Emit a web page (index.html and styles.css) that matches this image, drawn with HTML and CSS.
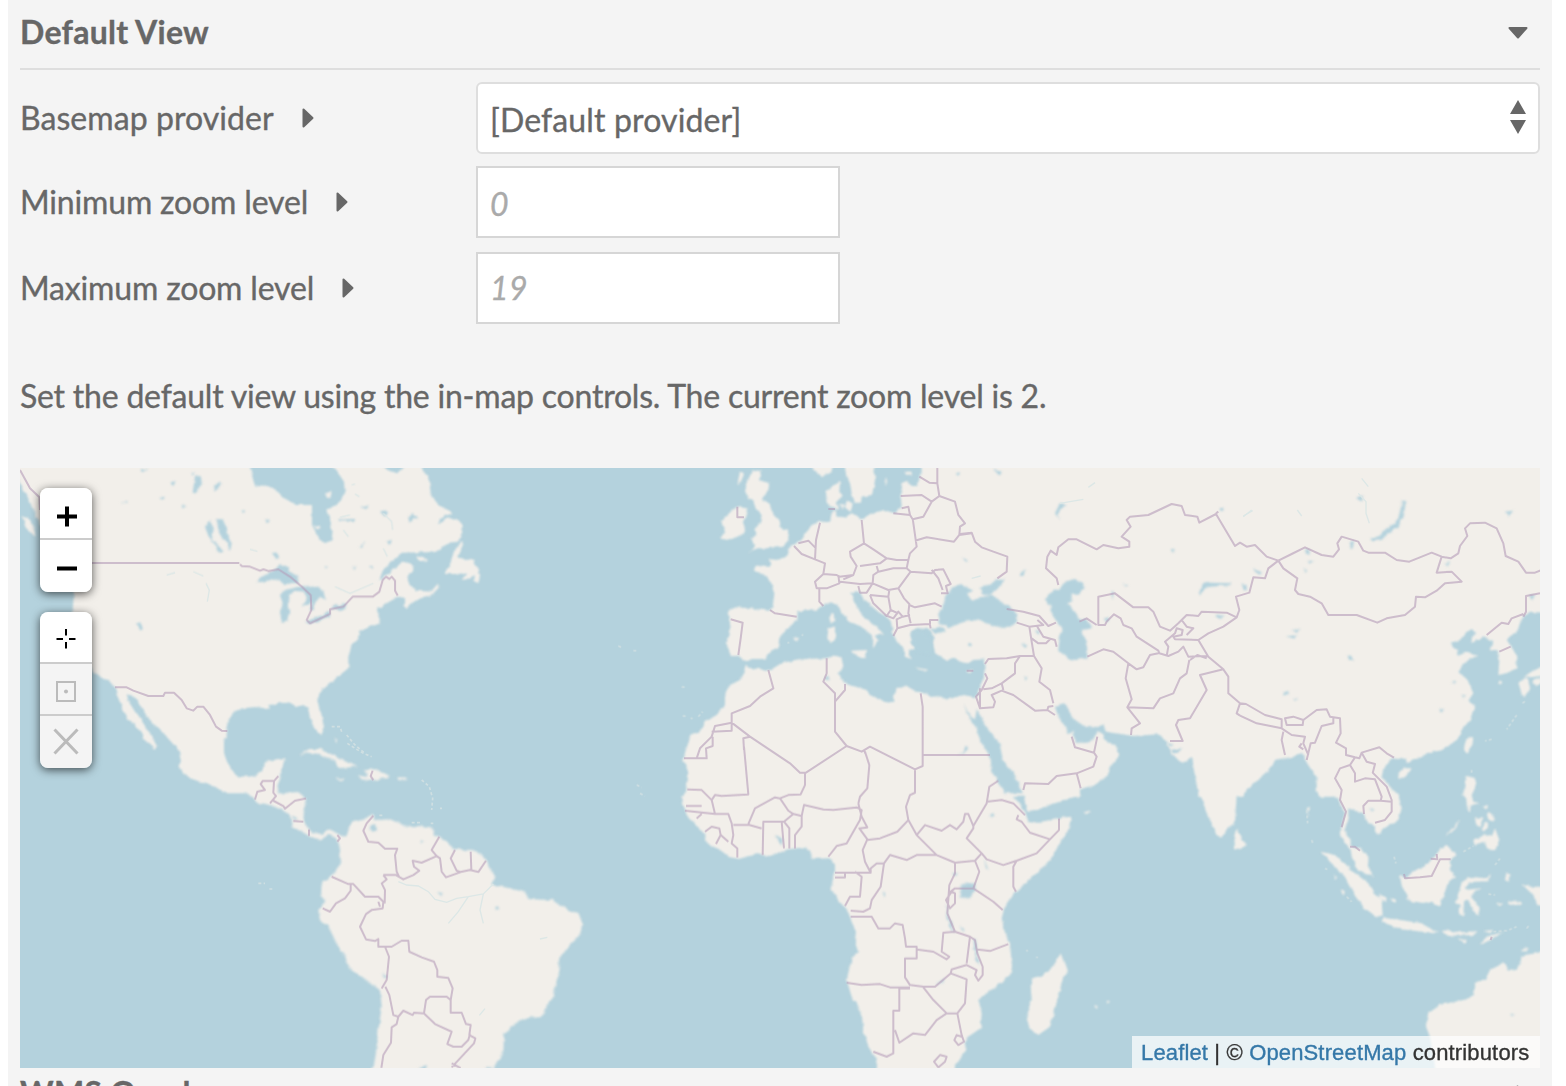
FILE: index.html
```html
<!DOCTYPE html>
<html lang="en">
<head>
<meta charset="utf-8">
<title>Default View</title>
<link rel="stylesheet" href="styles.css">
</head>
<body>
<main class="panel">
  <header class="section-head">
    <h2 class="section-title">Default View</h2>
    <svg class="caret-down" viewBox="0 0 20 12"><path d="M1.5 1h17L10 10.5Z"/></svg>
  </header>

  <div class="fields">
    <div class="field">
      <span class="label">Basemap provider <svg class="caret-right" viewBox="0 0 12 20"><path d="M1.5 1.5v17L10.5 10Z"/></svg></span>
      <div class="select"><span>[Default provider]</span>
        <svg class="spinner" viewBox="0 0 16 34"><path d="M8 0l8 14H0ZM8 34l8-14H0Z"/></svg>
      </div>
    </div>
    <div class="field">
      <span class="label label-tight">Minimum zoom level <svg class="caret-right" viewBox="0 0 12 20"><path d="M1.5 1.5v17L10.5 10Z"/></svg></span>
      <div class="input">0</div>
    </div>
    <div class="field field-last">
      <span class="label label-tight">Maximum zoom level <svg class="caret-right" viewBox="0 0 12 20"><path d="M1.5 1.5v17L10.5 10Z"/></svg></span>
      <div class="input input-max">19</div>
    </div>
  </div>

  <p class="hint">Set the default view using the in-map controls. The current zoom level is 2.</p>

  <div class="map">
    <svg class="tiles" viewBox="20 468 1520 600">
      <defs>
        <filter id="coast" filterUnits="userSpaceOnUse" x="0" y="440" width="1566" height="660" color-interpolation-filters="sRGB">
          <feTurbulence type="fractalNoise" baseFrequency=".16" numOctaves="2" seed="4" result="n"/>
          <feDisplacementMap in="SourceGraphic" in2="n" scale="4" xChannelSelector="R" yChannelSelector="G"/>
          <feGaussianBlur stdDeviation=".8"/>
        </filter>
        <filter id="soft" filterUnits="userSpaceOnUse" x="0" y="440" width="1566" height="660"><feGaussianBlur stdDeviation=".6"/></filter>
      </defs>

      <g class="land" filter="url(#coast)">
        <!-- western North America -->
        <g transform="translate(0 460) scale(.33333)">
          <path d="M40 0H745L752 30 765 80 800 76 820 85 845 110 890 135H905V735L870 728 840 728 830 735 805 733 800 746 760 740 720 745 700 760 685 780 678 795 685 815 672 845 672 880 685 915 705 945 730 955 775 945 792 925 800 905 855 895 850 915 838 950 825 1000H680L655 985 620 972 570 955 538 925 543 900 535 870 500 830 470 800 445 775 432 755 412 720 402 708 380 703 385 722 405 755 430 790 450 822 472 860 462 870 450 850 430 835 420 810 395 785 380 775 370 750 355 715 345 685 330 665 305 650 283 640 240 580 217 455 222 400 180 300 120 190 95 140 62 70 40 40Z"/>
          <path d="M68 168L90 180 105 205 108 232 85 212 72 190Z"/>
        </g>
        <!-- eastern North America -->
        <g transform="translate(240 460) scale(.33333)">
          <path d="M0 135H216L216 195 235 230 255 250 275 240 278 215 268 170 262 150 290 135 315 105 312 65 295 40 280 24 275 0H430V24L455 35 470 40 490 24V0H540L547 26 567 60 572 100 595 135 640 158 618 168 595 180 592 192 630 172 655 180 668 195 665 230 650 245 620 250 600 270 560 277 485 278 460 300 435 325 413 362 440 345 460 325 490 305 515 312 520 325 505 345 508 370 525 390 545 393 575 395 595 370 595 385 575 405 545 412 520 430 500 447 490 435 495 415 475 410 440 430 415 445 412 470 422 490 390 500 358 515 352 540 335 550 330 575 325 590 325 625 300 645 265 675 240 695 232 725 245 765 252 800 245 828 225 810 210 775 205 745 190 735 170 740 150 728 110 728 85 735 90 747 60 740 0 745Z"/>
          <path d="M660 245L670 252 652 288 680 300 705 295 700 312 715 325 720 345 715 370 700 362 705 345 680 358 665 360 680 340 650 342 612 342 630 318 640 280Z"/>
          <path d="M528 288L562 298 562 306 540 302ZM220 195L240 200 242 208 228 206ZM255 100L275 95 270 115 258 110ZM282 832L295 845 290 850Z"/>
        </g>
        <!-- Central and South America, Caribbean -->
        <g transform="translate(240 740) scale(.33333)">
          <path d="M-20 110L50 108 70 85 82 62 137 56 130 75 120 105 113 160 175 156 198 175 192 215 190 243 210 275 245 282 270 268 300 285 312 290 325 270 335 248 370 238 400 222 402 240 450 238 500 258 545 258 575 262 582 285 600 292 645 328 700 330 738 355 750 385 768 410 752 432 800 443 855 457 868 477 940 480 990 515 1015 518 1027 550 1020 585 985 620 957 655 955 700 940 770 920 800 905 830 870 832 825 850 792 885 790 935 765 975 755 1010H390L405 960 415 870 425 800 420 750 365 710 322 680 318 655 300 630 265 560 240 540 235 510 255 480 242 470 250 425 275 405 303 370 300 330 295 306 270 282 255 290 245 305 210 290 185 275 158 262 155 235 130 210 90 195 50 187 25 162 -20 148Z"/>
          <path d="M178 45L205 28 240 28 280 45 310 62 352 80 300 84 285 65 240 42 205 38ZM285 112L315 117 305 123ZM352 110L385 110 372 88 410 88 450 108 430 115 400 122 365 118ZM472 112H498V120H475Z"/>
        </g>
        <!-- Europe and northern Africa -->
        <g transform="translate(680 460) scale(.33333)">
          <path d="M722 0L722 40 712 78 695 78 680 62 668 70 662 105 665 140 645 160 610 150 570 165 545 178 520 160 490 172 470 165 466 150 440 130 438 95 455 80 480 65 478 95 485 110 470 125 475 145 455 160 450 185 420 185 395 195 380 215 365 240 340 255 325 270 325 285 300 298 285 300 270 292 275 320 225 320 222 332 260 348 275 375 283 400 278 440 265 452 210 445 165 442 145 455 150 480 150 520 140 550 152 588 175 588 200 605 215 597 255 597 270 575 295 560 298 535 315 510 352 480 352 455 385 450 410 453 430 437 450 427 472 435 480 455 510 485 545 500 575 525 580 550 577 567 590 550 597 540 585 525 612 524 590 500 560 480 540 455 520 420 510 400 530 393 540 400 550 418 570 435 600 460 632 480 637 510 645 535 665 560 675 590 693 597 685 570 705 567 690 545 702 540 688 515 720 505 748 508 765 530 760 545 765 580 800 600 820 592 850 608 865 610 880 600 912 598 915 620 910 660 898 690 885 712 850 705 800 718 765 710 700 690 680 678 650 685 640 722 625 728 570 705 560 690 500 672 488 660 475 640 490 620 485 595 470 587 440 595 360 598 310 608 270 630 210 625 200 615 195 635 180 660 150 675 135 710 135 735 110 765 75 785 50 830 25 870 10 895 25 935 20 990V1010H1010V0Z"/>
          <path d="M215 35L245 30 242 50 235 60 268 68 265 90 245 118 270 130 275 155 298 180 305 210 328 208 325 240 310 260 260 265 232 265 205 280 225 260 212 235 230 225 222 205 240 190 245 165 225 145 220 120 205 115 195 90 205 60ZM170 140L200 145 203 165 192 185 195 215 165 235 140 243 123 235 135 215 125 190 135 170ZM180 40L192 40 185 60 172 75Z"/>
          <path d="M392 0L400 30 425 48 450 40 470 0ZM490 0L500 50 510 70 515 100 525 128 543 128 545 110 575 105 585 80 583 0ZM618 50L622 60 612 80ZM478 128L495 135 485 150ZM500 122L518 130 512 155 495 145ZM675 35H695V48L680 45Z"/>
          <path d="M460 455L463 480 453 492 448 472ZM465 498L465 540 450 550 442 535 445 505ZM512 572L560 570 552 598 535 590ZM340 532L358 535 348 545ZM705 622L745 630 730 635ZM855 635L880 628 870 640Z"/>
        </g>
        <!-- western and central Asia -->
        <g transform="translate(960 460) scale(.33333)">
          <path d="M85 0H1010V888L945 900 920 935 865 985 850 1010H716L706 950 700 920 697 885 680 905 660 905 635 880 625 850 597 823 520 828 435 815 430 838 462 855 480 880 455 915 445 940 400 970 360 990V1010H60V700L75 650 72 598Z"/>
        </g>
        <!-- eastern Asia -->
        <g transform="translate(1240 460) scale(.33333)">
          <path d="M-10 0H930V460L870 455 842 480 835 510 797 540 828 580 830 625 800 640 775 645 778 600 775 575 752 570 760 545 735 530 690 550 705 520 700 507 680 515 660 540 630 548 635 562 655 570 655 587 680 578 712 587 685 600 655 632 685 665 700 700 685 722 705 735 690 780 665 810 650 840 610 868 560 882 500 905 497 895 460 893 430 925 425 950 450 985 460 1010H235L230 950 205 915 185 880 150 888 105 895 100 915 65 945 25 980 -10 1005Z"/>
          <path d="M695 828L698 850 682 885 672 865 680 835ZM835 668L860 655 870 680 855 712 845 700ZM850 655L885 630 930 610V645L870 652ZM880 662L905 650V668L887 680ZM775 662H785V672H775Z"/>
        </g>
        <!-- central and southern Africa -->
        <g transform="translate(660 740) scale(.33333)">
          <path d="M95 -20L68 58 85 95 85 125 65 180 80 225 110 255 135 285 140 305 180 330 210 352 235 357 290 343 330 348 385 328 435 322 447 335 460 357 505 355 525 370 525 400 512 445 535 480 560 510 572 535 588 575 585 600 597 635 575 655 560 720 575 770 605 820 610 870 625 920 645 950 660 1010H878L885 975 915 935 918 895 962 865 965 820 955 780 1000 745 1050 708 1056 680 1050 610 1035 580 1025 535 1032 510 1050 475 1080 445 1130 400 1170 360 1200 310 1225 270 1234 230 1190 235 1125 250 1105 245 1095 215 1070 180 1035 160 1005 110 995 60 970 10 960 -20Z"/>
        </g>
        <!-- Arabia, India, Madagascar -->
        <g transform="translate(940 740) scale(.33333)">
          <path d="M130 -20L180 30 190 65 240 120 250 165 262 212 290 210 345 190 405 170 425 145 460 138 505 105 510 80 540 42 525 20 480 0V-20ZM670 -20L690 30 730 70 755 45 765 80 775 150 800 220 830 285 845 293 865 260 885 250 890 165 920 150 965 110V-20Z"/>
          <path d="M362 640L382 695 370 710 350 790 330 860 295 885 268 865 260 820 275 780 272 735 280 715 310 705 340 680ZM890 265L918 315 905 328 885 325 883 290ZM430 212L450 216 440 222ZM462 796L473 798 469 807ZM498 782L510 783 503 791Z"/>
        </g>
        <!-- south-east Asia and Australia -->
        <g transform="translate(1240 740) scale(.33333)">
          <path d="M-10 165L45 120 85 85 105 55 185 40 205 75 230 110 230 155 250 155 275 138 285 155 300 190 315 215 308 250 300 285 315 310 330 320 335 350 350 385 375 400 402 412 385 380 385 350 365 330 335 315 325 290 312 270 325 240 325 205 345 212 370 220 385 250 405 260 410 285 440 260 475 240 485 205 475 165 450 140 425 110 430 80 460 52 500 50 500 65 560 42 610 28 650 -15H-10Z"/>
          <path d="M245 335L285 345 340 395 385 430 400 460 425 480 428 530 405 528 370 500 335 450 310 405 270 365ZM430 533L480 540 515 545 545 550 575 570 600 576 560 577 480 567 425 545ZM480 405L500 415 515 395 550 380 580 355 600 325 620 315 650 345 630 360 630 385 648 412 625 425 610 470 600 500 575 488 540 488 500 480 498 455 485 440Z"/>
          <path d="M665 428L685 410 740 415 755 402 745 424 690 426 672 450 725 445 690 465 715 500 716 528 700 512 685 480 672 490 670 525 658 525 662 495 648 485 658 450Z"/>
          <path d="M680 108L708 115 705 145 695 165 700 185 720 190 692 195 690 220 680 205 680 185 665 165 675 145ZM700 300L735 285 755 290 765 265 778 300 765 332 740 325 735 302 705 318ZM615 290L640 262 662 238 642 268ZM705 232L728 235 722 262 708 255ZM725 200L745 195 738 210ZM745 215L760 222 762 245 745 235ZM738 245L745 250 732 275 725 268ZM475 100L490 85 515 85 500 110 480 115Z"/>
          <path d="M605 573L630 570 655 577 715 573 705 585 620 587ZM730 573L760 570 750 580ZM650 595L680 600 675 608ZM718 615L740 590 790 576 765 590 740 605ZM768 489L790 487 780 499ZM805 483L850 486 845 495 810 493ZM800 395L812 400 805 425 795 420ZM845 432L870 440 930 440V500L890 495 885 470ZM415 462L432 468 440 482 420 478ZM455 476H468V487H455ZM280 405L292 415 285 420ZM302 448L315 458 308 464ZM200 205L210 200 205 230ZM840 628L870 624 860 635Z"/>
          <path d="M930 630L870 640 845 650 830 690 805 688 790 670 750 690 735 720 710 725 700 760 680 778 600 795 565 820 558 860 570 890 590 1010H930Z"/>
        </g>
      </g>

      <g class="water" filter="url(#coast)">
        <g transform="translate(0 460) scale(.33333)">
          <path d="M585 50L602 48 605 65 590 100 578 98ZM572 35L582 38 578 48ZM645 78L662 62 660 78 642 92ZM650 178L668 178 680 205 688 235 695 250 690 272 683 265 685 245 668 235 655 205ZM615 200L632 180 640 215 635 240 655 255 668 275 658 278 645 255 628 235ZM475 110L495 112 490 120ZM515 66L528 64 520 74ZM545 135L556 138 548 146ZM360 127H382V132ZM725 152L738 150 730 160ZM408 490L420 490 430 505 422 512ZM820 278H836V295L825 298ZM768 370L795 345 820 335 840 312 868 322 870 335 895 350 895 370 850 372 835 358 800 362ZM420 28L445 26 428 38Z"/>
        </g>
        <g transform="translate(240 460) scale(.33333)">
          <path d="M120 405L135 390 180 380 235 380 250 395 258 420 240 410 228 425 222 450 210 450 212 425 188 440 200 415 192 395 160 392 150 410 142 430 150 450 140 485 125 488 120 455 128 430ZM198 485L235 470 270 455 270 468 210 492ZM268 448L290 436 320 432 312 450 285 448ZM298 178L345 178 340 186 300 184ZM365 138L385 136 380 146ZM420 155L435 148 445 160 438 170ZM505 170L520 158 535 175 520 175 508 188ZM355 265L375 245 368 262ZM440 240L455 240 450 258ZM252 315L265 318 258 326ZM335 320L350 320 342 328ZM385 318H398V325ZM75 175L90 180 82 186Z"/>
        </g>
        <g transform="translate(680 460) scale(.33333)">
          <path d="M780 490L775 460 788 440 795 415 815 385 840 370 865 385 880 392 862 400 878 422 900 412 935 404 965 425 1000 450 1012 468 1010 488 990 500 950 500 900 482 870 480 840 490 805 505ZM898 385L950 362 972 355 955 385 930 405 905 400ZM750 508L780 500 800 512 770 520ZM845 293L866 300 860 306ZM830 38H840V46H830ZM940 28L962 32 958 46ZM865 550H875V558H865Z"/>
          <path d="M852 730L872 770 885 778 890 750 900 765 925 810 960 850 968 900 1000 940 1030 1000H975L938 940 930 890 905 850 885 800 862 760ZM858 852L862 870 835 888 852 872ZM435 652H450V659H435ZM690 520L725 512 755 540 755 580 720 580 700 560Z"/>
        </g>
        <g transform="translate(960 460) scale(.33333)">
          <path d="M315 365L345 357 370 370 370 390 350 405 335 400 335 425 322 430 345 455 360 480 380 480 395 505 365 510 375 535 382 570 382 595 345 600 320 592 295 570 300 530 308 510 290 485 272 455 272 440 257 420 270 400 300 385ZM285 740L310 730 328 750 338 775 375 800 410 803 430 792 440 825 425 822 415 812 400 840 380 848 345 848 340 815 325 822 315 795 295 770Z"/>
          <path d="M715 395L725 375 745 368 810 370 808 376 750 380 735 385 722 405ZM485 370L508 376 500 382ZM455 395L465 398 458 420ZM435 475L448 472 440 490ZM762 468L795 466 780 476ZM845 372L862 385 852 388ZM878 328L905 335 900 345ZM285 160L300 130 320 132 305 145 292 165 302 185ZM180 345L200 325 190 345ZM632 268L645 266 638 278ZM102 28L125 32 120 48ZM636 870L665 865 655 880 640 880ZM622 848L640 850 632 858ZM780 142H790V152H780ZM185 550L200 552 192 562ZM192 650L205 655 198 662ZM228 510L240 515 235 525Z"/>
        </g>
        <g transform="translate(1240 460) scale(.33333)">
          <path d="M486 122H497L492 165 475 200 450 215 425 240 398 244 390 236 415 232 440 205 465 190 480 155ZM330 245L342 245 338 265 332 268ZM195 268H210L208 285 198 280ZM350 115L372 105 365 125ZM615 315L630 303 622 320ZM795 155L820 152 805 168ZM868 405L888 405 878 422ZM155 510L182 506 170 515ZM138 529L172 526 165 536ZM320 588L332 586 342 600 325 600ZM598 748L612 750 604 758ZM38 330L65 338 60 344ZM5 372L20 378 15 390ZM132 694H145V703H132ZM160 716L173 715 168 725ZM638 662L648 664 643 672ZM665 706L677 708 670 718ZM205 300L218 304 212 310ZM190 328L198 330 194 340Z"/>
        </g>
        <g transform="translate(240 740) scale(.33333)">
          <path d="M392 255L405 252 408 270 398 276 390 265ZM542 300L550 302 545 315ZM592 455L608 460 602 468ZM425 700L445 710 440 718ZM768 498L778 505 772 510ZM538 980L560 975 555 1000 540 1000ZM740 980H755V1000H740ZM152 225L172 235 165 240Z"/>
        </g>
        <g transform="translate(660 740) scale(.33333)">
          <path d="M905 432L950 430 945 448 930 475 902 472ZM972 352L978 372 988 388 978 385ZM858 490L865 530 885 578 875 570 860 535ZM940 595L950 600 950 645 960 672 950 665 943 630ZM345 288L368 295 365 320 355 305ZM880 400L892 396 885 410ZM825 735L855 715 850 725ZM898 560L918 572 910 575ZM992 220H1001V230H992ZM668 458L676 462 674 472Z"/>
        </g>
        <g transform="translate(1240 740) scale(.33333)"><path d="M388 205L402 208 398 216ZM810 824L825 820 820 828Z"/></g>
      </g>

      <g class="streams" filter="url(#soft)">
        <path transform="translate(240 740) scale(.33333)" d="M475 425L500 435 535 438 565 455 585 478 620 487 650 475 685 470 730 462 760 432M685 470L655 515 625 550M730 462L720 510 730 550M718 826L735 806M900 597L922 592"/>
        <path transform="translate(1240 460) scale(.33333)" d="M355 100L378 125 378 160 388 190M365 55L385 80M10 168L38 152M172 150L185 168"/>
        <path transform="translate(240 460) scale(.33333)" d="M430 160L455 185 458 210M285 380L330 400 400 370M310 210L325 230M300 172L330 165M335 75L345 72M345 102L358 110M430 265L442 290"/>
        <path transform="translate(0 460) scale(.33333)" d="M500 345L525 338M580 335L610 348M618 370L628 390 622 425M750 268L772 274"/>
        <path transform="translate(960 460) scale(.33333)" d="M300 130L330 125 370 118M385 82L405 68M850 170L875 150M35 355L62 348"/>
      </g>

      <!-- small island chains -->
      <g class="islets" filter="url(#soft)">
        <path transform="translate(240 740) scale(.33333)" d="M545 120L568 140 578 175 575 210M600 205H606M572 250H580M515 248H540M418 226H428M55 430H75M88 447H97M322 10L345 25 370 40 395 50"/>
        <path transform="translate(240 460) scale(.33333)" d="M275 800H300L305 815M320 825L345 855 375 880"/>
        <path transform="translate(680 460) scale(.33333)" d="M8 768H22M32 775H38M55 770L68 755M5 681H16M322 548H328M365 525H370"/>
        <path transform="translate(1240 460) scale(.33333)" d="M855 725L845 730M830 765L800 808M755 838L735 843"/>
        <path transform="translate(1240 740) scale(.33333)" d="M200 210L203 250M215 300L220 315M255 385L262 388M320 470L335 485M760 575L800 572 830 560M860 565L868 555M670 335L700 318M780 355L765 375M745 462L765 465M695 90V98M462 350L468 370"/>
        <path transform="translate(940 740) scale(.33333)" d="M258 632H264M288 652H294"/>
        <path transform="translate(600 620) scale(.33333)" d="M55 78L65 82M100 92H110M110 495L125 502M120 520L135 528"/>
      </g>

      <g class="borders" filter="url(#soft)">
        <path transform="translate(0 460) scale(.33333)" d="M60 30L90 85 118 112 120 150M270 309H718M345 682H380L400 692 445 708H490L495 698H522L545 720 560 745 580 752 592 740H610L630 765 648 800 665 812 682 813"/>
        <path transform="translate(240 460) scale(.33333)" d="M0 313L5 318 30 320 60 332 70 328 85 333 115 328 150 350 185 380 212 405 214 450 200 480 210 490 270 462V448L310 440 338 410H398L418 395 428 360 438 350 448 357 455 350 465 362V392L473 407"/>
        <path transform="translate(240 740) scale(.33333)" d="M45 178L52 155 75 150 62 132 68 123H102L115 108M102 123L100 158 108 168 90 190M100 182L130 198 135 206 165 182 198 175M160 243L190 245M207 268V288M292 285L300 295 292 305M398 92L392 108 400 120M400 227L380 250 370 272 385 305 415 308 435 326H472L465 345 470 395 478 412M430 405H468L490 418 520 405 538 392 522 380 518 362 545 368 590 348 575 330 598 290M590 348L600 355 605 395 618 412 662 396 650 392 632 355 645 330M662 396L690 390 715 396 738 362M694 388L692 335M430 405L440 418 425 430 435 450 434 490M275 410L325 432 340 432 375 470H415L430 485 428 505 395 510 378 522 360 560 378 598 405 603 415 597V620H435L455 620 485 602H505L508 635 545 652 582 665 592 690V710L625 714 638 745 632 780M332 435V452L315 475 288 490 270 515 248 505M435 620L447 650 440 720 425 745M436 740L448 765 460 825 475 830 490 812 518 825 522 818 552 820 558 780 570 770H620L632 780V818H665L678 852 692 855 688 885 706 895 702 910 635 982M552 820L585 852 635 875 622 912 640 920H665L685 900 690 882M475 830L470 852 455 862 453 908 430 945 424 984M635 970L662 984M415 485L420 500"/>
        <path transform="translate(680 460) scale(.33333)" d="M172 140V172H192M152 478L188 488 182 535 175 585M270 450L285 460 350 470M342 258L365 282 405 298 435 310 430 342 470 345 478 350 520 345M405 298L408 240 420 188M355 250L385 242 405 262M430 342L405 365 410 385 440 385 478 370 475 345M418 388V425L430 438M545 180L552 250M445 147H465M552 250L510 275 512 290 530 318 520 345 490 358M552 250L580 268 620 295 600 310 540 318M620 295L650 300 685 300 690 280 710 260 698 175M590 318L595 335 580 345 578 370 540 372 480 365M595 335L640 325 680 325 685 300M680 325L692 335 755 340 765 330 790 328 812 372 798 378 803 400 783 400M755 330L775 355 788 390M692 335L670 365 655 385 625 390 578 370M578 370L560 398H540L535 378M570 405L600 408 625 410 628 390M570 405L580 430 620 468 632 450 625 410M625 390L655 385 672 415 688 432 685 460 692 490M688 435L705 442 765 430 785 440M615 465L640 475 655 455 668 470 650 478 652 505 640 528M632 450L655 460M668 470L690 465M652 505L690 495 750 492V480H775M750 495L752 505M718 50L748 68 772 70V24M772 70L778 108 755 125 725 105 662 108M755 125L730 170 698 178 690 165 640 160M690 165L685 140 665 145M778 108L825 125 835 165 855 190 840 200 838 225 822 245 740 232 705 242M838 225L875 220M265 630L280 685 240 710 210 738 155 760V812L95 815M155 788L105 798 95 830 60 865 50 895H12M98 830V858L78 865 80 895H50M155 788L210 830 330 910 360 938H378L500 858 465 815V700L430 665 440 640V595M465 725L495 690V672M500 858L545 875 570 860 705 928 728 918V885H930M722 700L728 740V885M705 928V930M375 938V945M552 870L556 880M210 830L190 835 192 870M860 632L880 632"/>
        <path transform="translate(960 460) scale(.33333)" d="M0 222L35 218 45 245 65 262 100 275 142 290 140 335 112 355M75 612L85 597 140 595 180 588 222 588 245 625 238 665 270 690 280 730M180 588L165 610V640L125 670 95 685 70 688M75 640L82 655 65 690 48 710 60 745 100 742 105 725 95 705 125 692 160 705 225 752 262 750 265 740 280 738M125 670L130 690M262 750L285 765M140 447L190 455 238 468 265 498 288 488M170 488L208 500 215 545 222 588M208 500L250 495 232 480M232 500L250 530 285 540 290 560M215 535L235 550 258 550 270 538M295 375L290 355 258 325 262 290 272 272 290 285 295 262 325 238H350L410 268 430 255 475 265 508 260V245L485 230 512 200 500 180 510 170 565 165 635 132 665 138 675 165 712 170 718 188 768 162 825 258 840 248 860 260 885 255 920 290 955 302M768 160L775 155M955 302L925 325 915 355 880 352 868 398 828 410 838 450 830 472 800 458 725 455 715 468 680 465 655 490 630 512 600 500 580 455 565 442H520L465 400 415 410V495H435L440 485 462 463 482 475 490 495 515 505 530 530 595 572 598 580 625 588 655 575 670 560 685 590 742 588M358 485L380 475 410 495M382 590L430 568 460 575 505 610 530 628 550 622 570 585 595 580M505 610L497 655 515 718 502 742 540 790 515 805 513 825M502 742L580 745 600 715 640 700 660 655 680 640 688 600M620 588L625 560 615 545 645 520 650 505 668 510 665 525 640 530 645 538 715 540 745 520 790 500 830 472M665 480L680 500 700 505 680 525M715 540L745 590 790 628 720 645 740 690 690 775 655 780 648 795 668 843H630M790 628L805 650V700L840 730 858 732M840 730L830 760 840 767M690 600L712 585 740 595M335 830L345 862 402 878 412 830M402 878L410 890 400 920 350 940 290 948 265 972 195 970 190 990M350 940L362 985M60 685V745"/>
        <path transform="translate(1240 460) scale(.33333)" d="M115 302L155 282 195 262 245 285 280 290 297 268 292 250 305 230 355 245 370 272 385 278H435L470 300 508 305 575 278 605 290 632 295 655 280 660 258 682 228 675 205 690 190 735 188 770 205 790 250 797 288 835 305 858 338H885L905 330M605 290L590 338 635 335 665 365 615 370 590 392 555 412 528 410 525 440 495 465 440 475 412 488 350 465H265L245 430 210 410 175 402 165 390 172 355 130 325 115 302M740 525L785 488 805 492 815 475 850 462M900 400L858 408V455L850 470M778 575L812 560M0 732H18L75 765 125 778V805L50 790 0 767M135 775L160 770 190 780 188 795 140 795ZM190 780L230 750 260 748 270 770 300 775 302 820 288 848 318 865V885L345 892M280 772V790L245 798 225 848 212 850 200 900M125 805L155 825 195 830 190 850 205 885M130 815L125 840 135 885M185 850L178 860 190 868M345 892L330 915M345 892L358 895 365 878 418 862 440 880 462 893M365 878L380 905 405 912 398 940"/>
        <path transform="translate(1240 740) scale(.33333)" d="M330 75L300 85 285 115 305 150 300 180 318 215 305 262M330 75L345 100V125L375 115 405 118 425 170 422 182H385L370 198 372 222M398 98L440 140 455 180 455 215 435 240 405 248M422 182L455 185M330 320L345 320 360 332M492 402L495 415 540 412 575 408 600 358 632 358M572 356L592 358 590 342M755 590L752 600"/>
        <path transform="translate(660 740) scale(.33333)" d="M82 148L125 150 155 180 165 165 185 168 265 163 252 20M155 180L165 222 75 212M78 198H125M165 222L205 222 215 250 220 285 215 310 232 325V352M110 235L125 222M135 275L155 260 178 265 182 285 168 312M182 285L205 305M220 255H268L305 265M265 252L285 205 345 172 360 175 385 165 422 163 435 135V98M360 175L385 212 400 222 372 245H310L308 345M365 245L372 325M372 245L388 265V325M400 222L425 228 425 260 405 285V325M425 228L432 195 490 208 520 210 590 202 605 210 600 240 560 310 530 318 505 350M595 190L605 230 622 262 598 265 622 298 608 330 615 365 632 398M595 190L600 170 622 145 628 75 615 35M622 300L660 295 712 275 745 240 738 200 750 165 765 158V90M745 240L770 285 795 255 845 272 870 255 890 268 910 245 915 222H925L940 258 980 190 988 140 1015 122M770 285L830 345 770 345 740 360 690 345 672 370 650 370 632 385 632 398H525M830 345L885 368 945 362 965 340 920 295 940 265V250M980 185L1025 180 1060 190 1095 225M965 340L980 358 1030 375 1070 362 1130 340 1170 298 1110 278 1085 245 1070 238 1075 225M1170 298L1197 270V235M1070 362L1060 380V440L1068 455M945 362L958 395 940 445H885L865 460M940 445L1000 485 1028 510M885 368V400L868 435 862 520 885 575 850 578 845 635 868 650 860 658 820 635 770 628V620H738L735 595 728 555 705 550 690 565H655L635 530H572M672 370L662 440 635 480 630 505 610 515 572 512M585 395L605 410 600 470 570 470 555 498M525 412H555V395M875 455L885 460V490L870 505 858 480ZM885 575L930 590 920 670M930 590L945 600 952 640 968 680V705L955 722 945 705 950 690 920 675 875 688 872 700 825 740H790L750 735 735 712V655H770V625M952 628L990 633 1045 612M872 700L920 718 915 790 892 820H860L820 780 790 742M560 728L605 735 660 732 690 742H750M750 745H718V812H700V940L680 950 640 935M705 870L718 908 760 880 795 885 830 840 860 820M892 820L905 885 912 905 895 915 883 900 890 885 905 890M822 965L840 945 860 950 855 965 835 982Z"/>
      </g>
    </svg>

    <div class="controls">
      <div class="bar">
        <span class="btn"><svg viewBox="0 0 52 52"><path class="heavy" d="M17 28.500h20M27 18.500v20"/></svg></span>
        <span class="btn"><svg viewBox="0 0 52 52"><path class="heavy" d="M17 28.500h20"/></svg></span>
      </div>
      <div class="bar">
        <span class="btn"><svg viewBox="0 0 52 52"><path class="fine" d="M16.500 27h6.500M29 27h6.500M26 17v6.500M26 30v6.500"/></svg></span>
        <span class="btn off"><svg viewBox="0 0 52 52"><path class="fine" d="M17 18h18v19H17Z"/><circle cx="26" cy="27.500" r="2"/></svg></span>
        <span class="btn off"><svg viewBox="0 0 52 52"><path class="cross" d="M14.500 13.500l23 24M37.500 13.500l-23 24"/></svg></span>
      </div>
    </div>
    <div class="attribution"><a>Leaflet</a> | © <a>OpenStreetMap</a> contributors</div>
  </div>

  <header class="section-head next-head">
    <h2 class="section-title">WMS Overlays</h2>
    <svg class="caret-right" viewBox="0 0 12 20"><path d="M1.500 1.500v17L10.500 10Z"/></svg>
  </header>
</main>
</body>
</html>
```
FILE: styles.css
```css
* { box-sizing: border-box; }

body {
  margin: 0;
  height: 1086px;
  overflow: hidden;
  background: #fff;
  color: #676767;
  font: 32px/40px Lato, sans-serif;
  -webkit-text-stroke: .35px currentColor;
}

.panel {
  height: 1086px;
  margin: 0 14px 0 8px;
  padding: 0 12px;
  overflow: hidden;
  background: #f4f4f4;
}

svg { display: block; fill: #676767; }

.section-head {
  display: flex;
  align-items: center;
  justify-content: space-between;
  height: 70px;
  padding: 0 12px 4px 0;
  border-bottom: 2px solid #dedede;
}

.section-title { margin: 0; font-size: 32px; font-weight: 700; letter-spacing: .25px; }

.caret-down { width: 20px; height: 12px; margin-top: 2px; stroke: #676767; stroke-width: 2; stroke-linejoin: round; }
.caret-right { width: 12px; height: 20px; stroke: #676767; stroke-width: 2; stroke-linejoin: round; }

.fields { display: flex; flex-direction: column; gap: 12px; padding-top: 12px; }
.field { display: grid; grid-template-columns: 456px 1fr; align-items: center; }
.field-last { margin-top: 2px; }
.label { display: flex; align-items: center; gap: 28px; letter-spacing: .06px; }
.label-tight { letter-spacing: -.16px; }

.select, .input {
  display: flex;
  align-items: center;
  height: 72px;
  padding: 4px 12px 0;
  border: 2px solid #dedede;
  background: #fff;
}
.select { justify-content: space-between; border-radius: 6px; letter-spacing: .14px; }
.spinner { width: 16px; height: 34px; margin: -6px 0 0; }
.input { width: 364px; border-color: #d6d6d6; color: #aaa; font-style: italic; letter-spacing: .5px; }
.input-max { padding-top: 0; }

.hint { margin: 52px 0; letter-spacing: -.215px; }

.map { position: relative; height: 600px; overflow: hidden; background: #b4d2dd; }
.tiles { width: 1520px; height: 600px; }
.land path { fill: #f2efea; }
.water path { fill: #b4d2dd; }
.streams path { fill: none; stroke: #dce7e6; stroke-width: 4; }
.islets path { fill: none; stroke: #cfdfe2; stroke-width: 5; stroke-dasharray: 9 7; }
.borders { opacity: .6; }
.borders path { fill: none; stroke: #b59bb8; stroke-width: 6; stroke-linejoin: round; }

.controls { position: absolute; top: 20px; left: 20px; display: flex; flex-direction: column; gap: 20px; }
.bar { width: 52px; overflow: hidden; border-radius: 8px; box-shadow: 0 2px 10px rgba(0, 0, 0, .65); }
.btn { display: block; height: 52px; background: #fff; }
.btn + .btn { border-top: 2px solid #ccc; margin-top: -2px; height: 54px; }
.btn svg { width: 52px; height: 52px; fill: none; stroke: #000; }
.off { background: #f4f4f4; }
.off svg { stroke: #bbb; }
.off circle { fill: #bbb; stroke: none; }
.heavy { stroke-width: 4; }
.fine { stroke-width: 2; }
.cross { stroke-width: 3; }

.attribution {
  position: absolute;
  right: 0;
  bottom: 0;
  width: 408px;
  height: 32px;
  padding-left: 9px;
  background: rgba(255, 255, 255, .7);
  color: #333;
  font: 22px/33px "Liberation Sans", sans-serif;
  letter-spacing: .15px;
  white-space: nowrap;
}
.attribution a { color: #3578a8; }

.next-head { padding-bottom: 19px; }
.next-head .caret-right { margin-top: 4px; }
</style>
```
